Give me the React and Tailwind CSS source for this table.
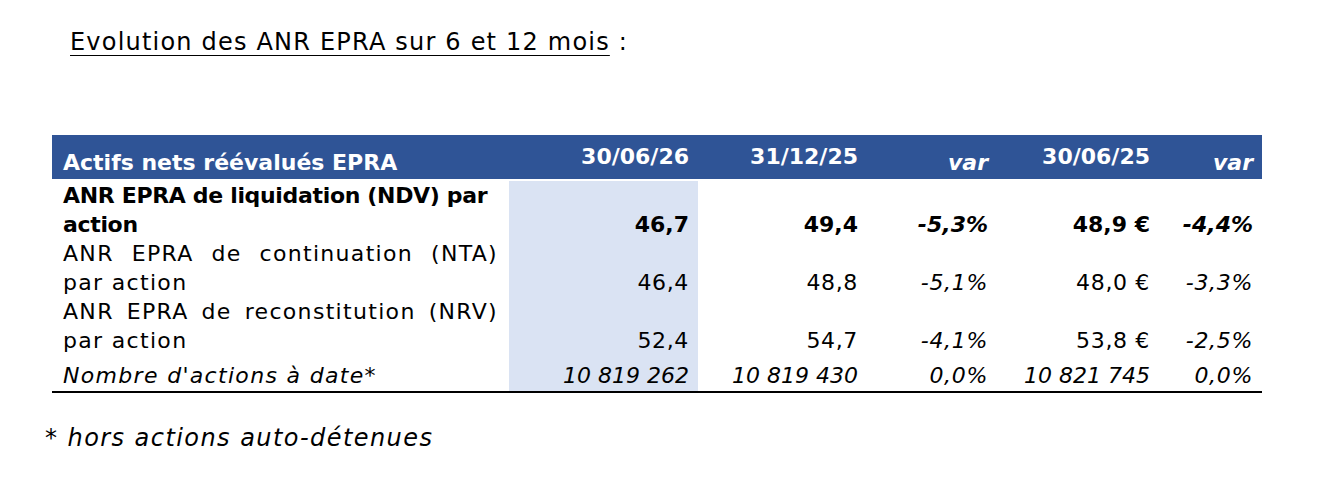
import React from "react";

const rows = [
  {
    label: "ANR EPRA de liquidation (NDV) par action",
    values: ["46,7", "49,4", "-5,3%", "48,9 €", "-4,4%"],
    bold: true,
  },
  {
    label: "ANR EPRA de continuation (NTA) par action",
    values: ["46,4", "48,8", "-5,1%", "48,0 €", "-3,3%"],
  },
  {
    label: "ANR EPRA de reconstitution (NRV) par action",
    values: ["52,4", "54,7", "-4,1%", "53,8 €", "-2,5%"],
  },
];

const App = () => {
  return (
    <div className="w-[1342px] h-[478px] bg-white text-black font-['DejaVu_Sans',sans-serif] pt-[26px]">
      <p className="pl-[70px] text-[24px] leading-[32px] tracking-[0.05em]">
        <span className="underline underline-offset-[5px] decoration-1">
          Evolution des ANR EPRA sur 6 et 12 mois
        </span>{" "}
        :
      </p>

      <div className="ml-[52px] mt-[77px] w-[1210px] text-[22px] leading-[29px]">
        {/* header */}
        <div className="grid grid-cols-[457px_189px_169px_130px_162px_103px] h-[44px] bg-[#2f5496] text-white font-bold">
          <div className="pl-[11px] self-end pb-[2px]">Actifs nets réévalués EPRA</div>
          <div className="text-right pr-[9px] self-end pb-[8px]">30/06/26</div>
          <div className="text-right pr-[9px] self-end pb-[8px]">31/12/25</div>
          <div className="text-right pr-[9px] self-end pb-[2px] italic">var</div>
          <div className="text-right pr-[9px] self-end pb-[8px]">30/06/25</div>
          <div className="text-right pr-[9px] self-end pb-[2px] italic">var</div>
        </div>

        {/* body */}
        <div className="border-b-2 border-black">
          {rows.map((r) => (
            <div
              key={r.label}
              className={`grid grid-cols-[457px_189px_169px_130px_162px_103px] ${
                r.bold ? "font-bold pt-[2px]" : "tracking-[0.03em]"
              }`}
            >
              <div
                className={
                  r.bold
                    ? "pl-[11px] pr-0 tracking-[-0.015em]"
                    : "pl-[11px] pr-[11px] text-justify tracking-[0.06em]"
                }
              >
                {r.label}
              </div>
              {r.values.map((v, i) => (
                <div
                  key={i}
                  className={`text-right pr-[9px] self-stretch flex items-end justify-end ${
                    i === 0 ? "bg-[#dae3f3]" : ""
                  } ${i === 2 || i === 4 ? "italic" : ""}`}
                >
                  {v}
                </div>
              ))}
            </div>
          ))}
          <div className="grid grid-cols-[457px_189px_169px_130px_162px_103px] h-[36px] italic">
            <div className="pl-[11px] self-end pb-[1px] tracking-[0.06em]">
              Nombre d'actions à date*
            </div>
            <div className="bg-[#dae3f3] text-right pr-[9px] flex items-end justify-end pb-[1px]">
              10 819 262
            </div>
            <div className="text-right pr-[9px] self-end pb-[1px]">10 819 430</div>
            <div className="text-right pr-[9px] self-end pb-[1px] tracking-[0.03em]">0,0%</div>
            <div className="text-right pr-[9px] self-end pb-[1px]">10 821 745</div>
            <div className="text-right pr-[9px] self-end pb-[1px] tracking-[0.03em]">0,0%</div>
          </div>
        </div>
      </div>

      <p className="pl-[45px] mt-[30px] text-[24px] leading-[30px] italic tracking-[0.06em]">
        * hors actions auto-détenues
      </p>
    </div>
  );
};

export default App;
